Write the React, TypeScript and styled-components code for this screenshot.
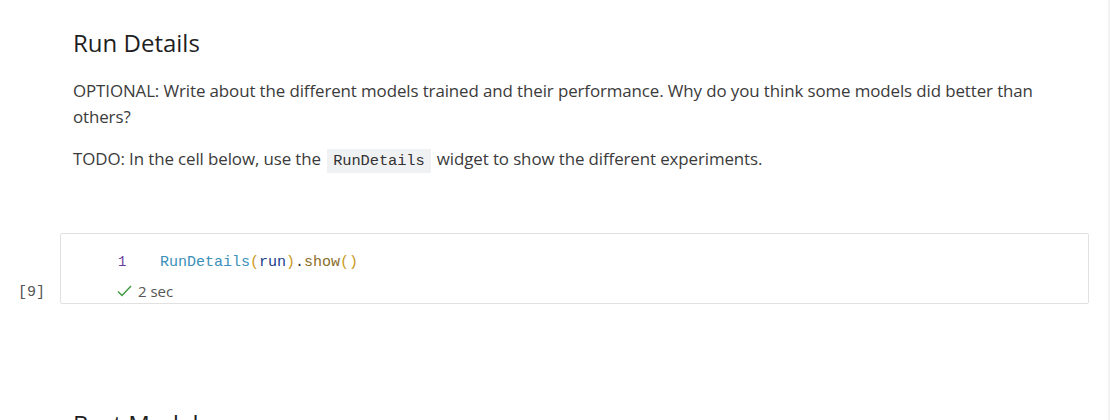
import React from "react";
import styled, { createGlobalStyle } from "styled-components";

const Global = createGlobalStyle`
  html, body { margin: 0; padding: 0; background: #ffffff; }
  body { font-family: "Open Sans", "Noto Sans", sans-serif; overflow: hidden; }
`;

const Page = styled.div`
  width: 1108px;
  height: 420px;
  overflow: hidden;
  background: #ffffff;
  border-right: 2px solid #f3f3f3;
`;

const Markdown = styled.div<{ $top: number }>`
  padding: ${(p) => p.$top}px 0 0 73px;
  width: 1000px;
`;

const Heading = styled.h2`
  margin: 0;
  font-family: "Open Sans", sans-serif;
  font-weight: 500;
  font-size: 24px;
  line-height: 30px;
  color: #1f1f1f;
`;

const Para = styled.p<{ $gap: number }>`
  margin: ${(p) => p.$gap}px 0 0 0;
  font-size: 16.9px;
  line-height: 26px;
  color: #3b3b3b;
  letter-spacing: -0.1px;
`;

const Chip = styled.code`
  font-family: "Liberation Mono", monospace;
  font-size: 15.4px;
  background: #f0f1f3;
  color: #333;
  padding: 3px 6px;
  margin: 0 2px;
`;

const CellRow = styled.div`
  display: flex;
  align-items: flex-end;
  margin-top: 59px;
`;

const Prompt = styled.div`
  width: 60px;
  box-sizing: border-box;
  padding: 0 0 1px 18px;
  font-family: "Liberation Mono", monospace;
  font-size: 15px;
  color: #555;
  line-height: 20px;
`;

const CellBox = styled.div`
  width: 1029px;
  height: 71px;
  box-sizing: border-box;
  border: 1px solid #e1e1e1;
  border-radius: 2px;
  padding: 17px 0 0 56px;
  background: #fff;
`;

const CodeLine = styled.div`
  display: flex;
  align-items: baseline;
  font-family: "Liberation Mono", monospace;
  font-size: 15px;
  line-height: 22px;
`;

const LineNo = styled.span`
  width: 43px;
  padding-left: 1px;
  box-sizing: border-box;
  color: #6a3e9c;
  font-size: 14px;
`;

const Tok = styled.span<{ $c: string }>`
  color: ${(p) => p.$c};
`;

const Status = styled.div`
  display: flex;
  align-items: center;
  gap: 6px;
  margin-top: 8px;
  font-size: 15px;
  color: #555;
  line-height: 18px;
`;

export default function App() {
  return (
    <Page>
      <Global />
      <Markdown $top={28}>
        <Heading>Run Details</Heading>
        <Para $gap={20}>
          OPTIONAL: Write about the different models trained and their performance. Why do you think some models did better than others?
        </Para>
        <Para $gap={16}>
          TODO: In the cell below, use the <Chip>RunDetails</Chip> widget to show the different experiments.
        </Para>
      </Markdown>
      <CellRow>
        <Prompt>[9]</Prompt>
        <CellBox>
          <CodeLine>
            <LineNo>1</LineNo>
            <Tok $c="#3b8fb8">RunDetails</Tok>
            <Tok $c="#c99a1e">(</Tok>
            <Tok $c="#1a3c8c">run</Tok>
            <Tok $c="#c99a1e">)</Tok>
            <Tok $c="#333">.</Tok>
            <Tok $c="#8a6d28">show</Tok>
            <Tok $c="#c99a1e">()</Tok>
          </CodeLine>
          <Status>
            <svg width="15" height="12" viewBox="0 0 15 12">
              <path d="M1 6.5 L5 10.5 L14 1" fill="none" stroke="#3c9a3c" strokeWidth="1.4" />
            </svg>
            <span>2 sec</span>
          </Status>
        </CellBox>
      </CellRow>
      <Markdown $top={105}>
        <Heading>Best Model</Heading>
      </Markdown>
    </Page>
  );
}
